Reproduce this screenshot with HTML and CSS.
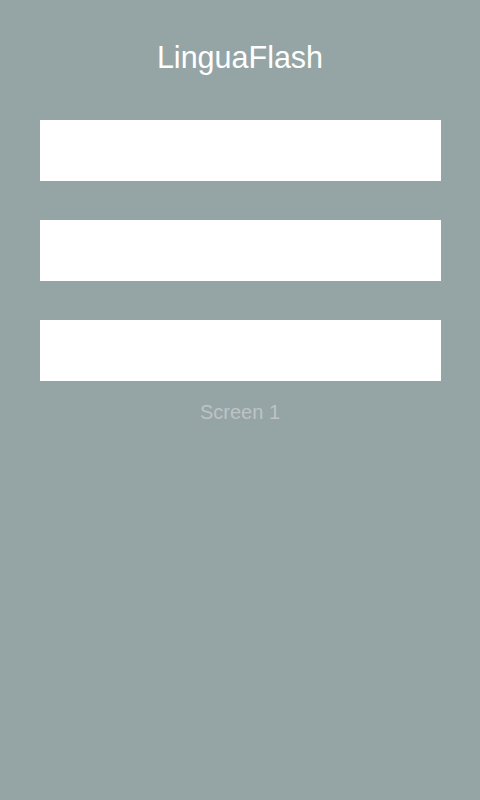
FILE: index.html
```html
<!DOCTYPE html>
<html>
<head>
<meta charset="utf-8">
<link rel="stylesheet" href="styles.css">
</head>
<body>
<div class="screen">
  <h1 class="title">LinguaFlash</h1>
  <div class="fields">
    <div class="field"></div>
    <div class="field"></div>
    <div class="field"></div>
  </div>
  <div class="label">Screen 1</div>
</div>
</body>
</html>
```
FILE: styles.css
```css
html, body {
  margin: 0;
  padding: 0;
  background: #95a5a6;
  width: 480px;
  height: 800px;
  overflow: hidden;
}
.screen {
  display: flex;
  flex-direction: column;
  align-items: center;
  padding-top: 40px;
  font-family: "Liberation Sans", Arial, sans-serif;
}
.title {
  margin: 0;
  font-size: 30.5px;
  font-weight: normal;
  line-height: 34px;
  color: #ffffff;
}
.fields {
  margin-top: 46px;
  display: flex;
  flex-direction: column;
  gap: 39px;
  align-self: flex-start;
  margin-left: 40px;
}
.field {
  width: 401px;
  height: 61px;
  background: #ffffff;
}
.label {
  margin-top: 20px;
  font-size: 20px;
  line-height: 23px;
  color: #bdc3c7;
}
```
